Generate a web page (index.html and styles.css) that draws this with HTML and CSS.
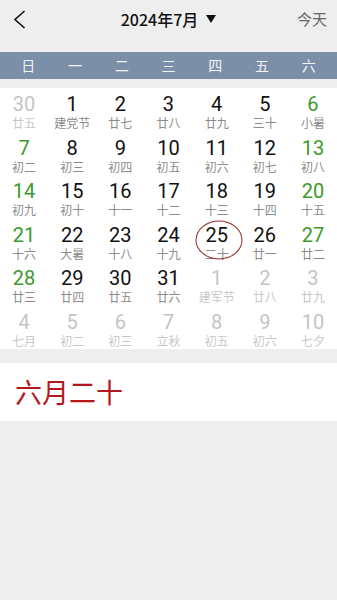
FILE: index.html
```html
<!DOCTYPE html>
<html lang="zh-CN">
<head>
<meta charset="utf-8">
<title>日历</title>
<link rel="stylesheet" href="styles.css">
</head>
<body>
<div class="app">
  <header class="top">
    <div class="back">
      <svg width="13" height="19" viewBox="0 0 13 19"><polyline points="11.5,1 2,9.5 11.5,18" fill="none" stroke="#111" stroke-width="1.6" stroke-linejoin="miter"/></svg>
    </div>
    <div class="title">2024年7月<span class="caret"></span></div>
    <div class="today">今天</div>
  </header>
  <div class="weekbar">
    <span>日</span><span>一</span><span>二</span><span>三</span><span>四</span><span>五</span><span>六</span>
  </div>
  <div class="grid">
    <div class="cell other"><span class="d">30</span><span class="l">廿五</span></div>
    <div class="cell"><span class="d">1</span><span class="l">建党节</span></div>
    <div class="cell"><span class="d">2</span><span class="l">廿七</span></div>
    <div class="cell"><span class="d">3</span><span class="l">廿八</span></div>
    <div class="cell"><span class="d">4</span><span class="l">廿九</span></div>
    <div class="cell"><span class="d">5</span><span class="l">三十</span></div>
    <div class="cell wk"><span class="d">6</span><span class="l">小暑</span></div>

    <div class="cell wk"><span class="d">7</span><span class="l">初二</span></div>
    <div class="cell"><span class="d">8</span><span class="l">初三</span></div>
    <div class="cell"><span class="d">9</span><span class="l">初四</span></div>
    <div class="cell"><span class="d">10</span><span class="l">初五</span></div>
    <div class="cell"><span class="d">11</span><span class="l">初六</span></div>
    <div class="cell"><span class="d">12</span><span class="l">初七</span></div>
    <div class="cell wk"><span class="d">13</span><span class="l">初八</span></div>

    <div class="cell wk"><span class="d">14</span><span class="l">初九</span></div>
    <div class="cell"><span class="d">15</span><span class="l">初十</span></div>
    <div class="cell"><span class="d">16</span><span class="l">十一</span></div>
    <div class="cell"><span class="d">17</span><span class="l">十二</span></div>
    <div class="cell"><span class="d">18</span><span class="l">十三</span></div>
    <div class="cell"><span class="d">19</span><span class="l">十四</span></div>
    <div class="cell wk"><span class="d">20</span><span class="l">十五</span></div>

    <div class="cell wk"><span class="d">21</span><span class="l">十六</span></div>
    <div class="cell"><span class="d">22</span><span class="l">大暑</span></div>
    <div class="cell"><span class="d">23</span><span class="l">十八</span></div>
    <div class="cell"><span class="d">24</span><span class="l">十九</span></div>
    <div class="cell sel"><span class="ring"></span><span class="d">25</span><span class="l">二十</span></div>
    <div class="cell"><span class="d">26</span><span class="l">廿一</span></div>
    <div class="cell wk"><span class="d">27</span><span class="l">廿二</span></div>

    <div class="cell wk"><span class="d">28</span><span class="l">廿三</span></div>
    <div class="cell"><span class="d">29</span><span class="l">廿四</span></div>
    <div class="cell"><span class="d">30</span><span class="l">廿五</span></div>
    <div class="cell"><span class="d">31</span><span class="l">廿六</span></div>
    <div class="cell other"><span class="d">1</span><span class="l">建军节</span></div>
    <div class="cell other"><span class="d">2</span><span class="l">廿八</span></div>
    <div class="cell other"><span class="d">3</span><span class="l">廿九</span></div>

    <div class="cell other"><span class="d">4</span><span class="l">七月</span></div>
    <div class="cell other"><span class="d">5</span><span class="l">初二</span></div>
    <div class="cell other"><span class="d">6</span><span class="l">初三</span></div>
    <div class="cell other"><span class="d">7</span><span class="l">立秋</span></div>
    <div class="cell other"><span class="d">8</span><span class="l">初五</span></div>
    <div class="cell other"><span class="d">9</span><span class="l">初六</span></div>
    <div class="cell other"><span class="d">10</span><span class="l">七夕</span></div>
  </div>
  <div class="lunar-panel">六月二十</div>
</div>
</body>
</html>
```
FILE: styles.css
```css
html, body {
  margin: 0;
  padding: 0;
  background: #eeeeee;
}
body {
  font-family: "Noto Sans CJK SC", "Noto Sans", sans-serif;
  color: #111;
}
.app {
  width: 337px;
}
.top {
  height: 38px;
  display: grid;
  grid-template-columns: 1fr auto 1fr;
  align-items: center;
}
.back {
  padding-left: 13px;
  display: flex;
  align-items: center;
  height: 38px;
}
.back svg {
  display: block;
}
.title {
  font-size: 16px;
  font-weight: 500;
  color: #111;
  display: flex;
  align-items: center;
  line-height: 20px;
}
.caret {
  display: inline-block;
  width: 0;
  height: 0;
  margin-left: 8px;
  border-left: 5.5px solid transparent;
  border-right: 5.5px solid transparent;
  border-top: 8px solid #111;
}
.today {
  justify-self: end;
  padding-right: 10px;
  font-size: 15px;
  color: #666;
  line-height: 20px;
}
.weekbar {
  margin-top: 14px;
  height: 27px;
  background: #7b8fa8;
  padding: 0 5px;
  display: grid;
  grid-template-columns: repeat(7, 1fr);
}
.weekbar span {
  text-align: center;
  font-size: 14px;
  line-height: 27px;
  color: #f2f4f7;
}
.grid {
  margin-top: 9px;
  background: #ffffff;
  display: grid;
  grid-template-columns: repeat(7, 1fr);
  grid-auto-rows: 43.5px;
}
.cell {
  position: relative;
  display: flex;
  flex-direction: column;
  align-items: center;
}
.d {
  font-family: Roboto, "Noto Sans", sans-serif;
  font-size: 20px;
  line-height: 20px;
  margin-top: 6px;
  color: #111;
}
.l {
  font-size: 12px;
  line-height: 12px;
  margin-top: 3px;
  color: #8c8c8c;
}
.wk .d {
  color: #3a9a2c;
}
.other .d {
  color: #c4c4c4;
}
.other .l {
  color: #c8c8c8;
}
.ring {
  position: absolute;
  left: 50%;
  top: 50%;
  width: 45px;
  height: 37px;
  margin-left: 2px;
  transform: translate(-50%, -50%);
  border: 1.3px solid #9b2a2a;
  border-radius: 50%;
}
.lunar-panel {
  margin-top: 14px;
  height: 58px;
  background: #ffffff;
  display: flex;
  align-items: center;
  padding-left: 15px;
  font-size: 27px;
  color: #b3191c;
  line-height: 30px;
}
```
